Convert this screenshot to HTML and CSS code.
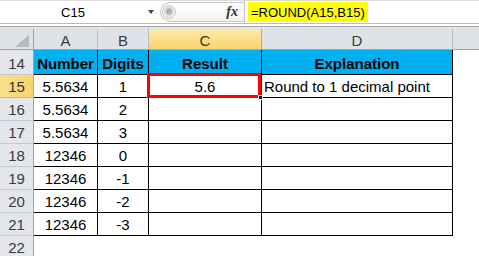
FILE: index.html
```html
<!DOCTYPE html>
<html lang="en">
  <head>
    <meta charset="UTF-8" />
    <title>ROUND example</title>
    <link rel="stylesheet" href="styles.css">
  </head>
  <body>
    <div class="formula-bar">
      <div class="name-box">
        <span class="cell-ref">C15</span>
        <span class="name-arrow"></span>
      </div>
      <div class="fx-group">
        <span class="splitter"></span>
        <span class="fx">fx</span>
      </div>
      <div class="formula">
        <span class="formula-text">=ROUND(A15,B15)</span>
      </div>
    </div>
    <div class="bar-gap"></div>

    <div class="sheet">
      <!-- column headers -->
      <div class="corner"></div>
      <div class="col-head">A</div>
      <div class="col-head">B</div>
      <div class="col-head active">C</div>
      <div class="col-head">D</div>
      <div class="col-head last"></div>

      <!-- row 14 -->
      <div class="row-head first">14</div>
      <div class="hd">Number</div>
      <div class="hd">Digits</div>
      <div class="hd">Result</div>
      <div class="hd">Explanation</div>
      <div class="blank"></div>

      <!-- row 15 -->
      <div class="row-head active">15</div>
      <div class="cell">5.5634</div>
      <div class="cell">1</div>
      <div class="cell selected">5.6<span class="sel-box"></span><span class="fill-handle"></span></div>
      <div class="cell text">Round to 1 decimal point</div>
      <div class="blank"></div>

      <div class="row-head">16</div>
      <div class="cell">5.5634</div>
      <div class="cell">2</div>
      <div class="cell"></div>
      <div class="cell"></div>
      <div class="blank"></div>

      <div class="row-head">17</div>
      <div class="cell">5.5634</div>
      <div class="cell">3</div>
      <div class="cell"></div>
      <div class="cell"></div>
      <div class="blank"></div>

      <div class="row-head">18</div>
      <div class="cell">12346</div>
      <div class="cell">0</div>
      <div class="cell"></div>
      <div class="cell"></div>
      <div class="blank"></div>

      <div class="row-head">19</div>
      <div class="cell">12346</div>
      <div class="cell">-1</div>
      <div class="cell"></div>
      <div class="cell"></div>
      <div class="blank"></div>

      <div class="row-head">20</div>
      <div class="cell">12346</div>
      <div class="cell">-2</div>
      <div class="cell"></div>
      <div class="cell"></div>
      <div class="blank"></div>

      <div class="row-head">21</div>
      <div class="cell">12346</div>
      <div class="cell">-3</div>
      <div class="cell"></div>
      <div class="cell"></div>
      <div class="blank"></div>

      <div class="row-head">22</div>
      <div class="blank"></div>
      <div class="blank"></div>
      <div class="blank"></div>
      <div class="blank"></div>
      <div class="blank"></div>
    </div>
  </body>
</html>
```

FILE: styles.css
```css
/* Base */
* {
  box-sizing: border-box;
}
body {
  margin: 0;
  font-family: "Liberation Sans", Arial, sans-serif;
  background-color: #fff;
  color: #000;
  overflow: hidden;
}

/* Formula bar */
.formula-bar {
  display: flex;
  height: 24px;
  border-top: 1px solid #dcdcdc;
  border-bottom: 1px solid #b9bcc0;
  font-size: 13px;
}
.name-box {
  width: 160px;
  display: flex;
  align-items: center;
}
.cell-ref {
  width: 146px;
  text-align: center;
  padding-top: 1px;
}
.name-arrow {
  width: 0;
  height: 0;
  border-left: 3.5px solid transparent;
  border-right: 3.5px solid transparent;
  border-top: 4px solid #444;
  margin-left: 2px;
}
.fx-group {
  width: 84px;
  display: flex;
  align-items: center;
  justify-content: space-between;
  margin: 1px 0;
  border: 1px solid #c6c8cb;
  border-right: none;
  border-radius: 11px 0 0 11px;
  background: linear-gradient(#fff, #f1f2f3);
  padding: 0 6px 0 1px;
}
.splitter {
  width: 14px;
  height: 14px;
  border-radius: 50%;
  border: 1px solid #c9cbce;
  background: radial-gradient(circle at 50% 45%, #a9acb0 0 2px, #dcdee0 4px, #f4f4f5 7px);
}
.fx {
  font-family: "Liberation Serif", serif;
  font-style: italic;
  font-weight: bold;
  font-size: 14px;
  color: #333;
}
.formula {
  flex: 1;
  border-left: 1px solid #c3c5c8;
  padding: 1px 0 0 3px;
}
.formula-text {
  display: inline-block;
  background-color: #ffff00;
  height: 20px;
  line-height: 21px;
  padding: 0 3px;
}
.bar-gap {
  height: 5px;
  background: linear-gradient(#fff 0 2px, #a3a7ac 2px 3px, #e2e4e7 3px);
}

/* Sheet grid */
.sheet {
  display: grid;
  grid-template-columns: 34px 64px 51px 113px 191px 1fr;
  grid-template-rows: 21px 25px repeat(8, 23px);
  font-size: 15px;
}
.corner {
  border-right: 1px solid #9fa4aa;
  border-bottom: 1px solid #9fa4aa;
  background: linear-gradient(to bottom right, transparent 50%, #b6bbc1 50%) no-repeat right 4px bottom 2px / 14px 12px, #dfe3e8;
}
.col-head {
  background-color: #dfe3e8;
  border-right: 1px solid #b9bec4;
  border-bottom: 1px solid #9fa4aa;
  color: #3a3a3a;
  text-align: center;
  line-height: 20px;
  padding-top: 2px;
}
.col-head.active {
  background: linear-gradient(#ffeaa5, #f9d46d);
  border-right-color: #e1a446;
  border-bottom-color: #e1a446;
  color: #333;
}
.col-head.last {
  border-right: none;
}
.row-head {
  background-color: #e3e6ea;
  border-right: 1px solid #9fa4aa;
  border-bottom: 1px solid #c5c9ce;
  color: #3a3a3a;
  text-align: center;
  line-height: 22px;
  padding-top: 1px;
}
.row-head.first {
  line-height: 24px;
  padding-top: 2px;
}
.row-head.active {
  background: linear-gradient(to right, #fbe08c, #f8d46c);
  border-bottom-color: #e7b45a;
  border-right-color: #e1a446;
  color: #333;
}

/* Table cells */
.hd {
  background-color: #00b0f0;
  border-right: 1px solid #000;
  border-bottom: 1px solid #000;
  font-weight: bold;
  text-align: center;
  line-height: 24px;
  padding-top: 2px;
}
.cell {
  border-right: 1px solid #000;
  border-bottom: 1px solid #000;
  text-align: center;
  line-height: 22px;
  padding-top: 1px;
  white-space: nowrap;
}
.cell.text {
  text-align: left;
  padding-left: 2px;
}
.selected {
  position: relative;
}
.sel-box {
  position: absolute;
  left: -2px;
  top: -2px;
  right: 0;
  bottom: -1px;
  border: 3px solid #ff0000;
}
.fill-handle {
  position: absolute;
  right: -2px;
  bottom: -3px;
  width: 5px;
  height: 5px;
  background-color: #000;
  border: 1px solid #fff;
}
```
